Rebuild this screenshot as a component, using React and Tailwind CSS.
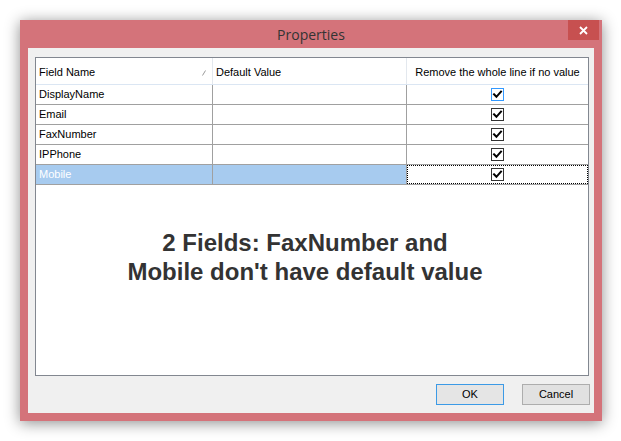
import React from "react";

const rows = [
  { name: "DisplayName", hover: true },
  { name: "Email" },
  { name: "FaxNumber" },
  { name: "IPPhone" },
  { name: "Mobile", selected: true },
];

function Check({ blue }) {
  return (
    <svg width="13" height="13" viewBox="0 0 13 13">
      <rect x="0.5" y="0.5" width="12" height="12" fill="#fff" stroke={blue ? "#3399ff" : "#333333"} />
      <path d="M3 6.3 L5.4 8.8 L10 3.6" fill="none" stroke="#000" strokeWidth="2" strokeLinecap="square" />
    </svg>
  );
}

export default function App() {
  return (
    <div className="w-[621px] h-[441px] bg-white pt-[20px] pl-[20px] font-['Liberation_Sans',Arial,sans-serif]">
      <div className="w-[582px] h-[401px] bg-[#d4737a] shadow-[0_2px_14px_rgba(0,0,0,0.45)] flex flex-col">
        {/* title bar */}
        <div className="h-[28px] grid grid-cols-[1fr_auto_1fr]">
          <div />
          <div className="self-center pt-[1px] text-[14px] text-[#333] font-['Open_Sans',sans-serif]">Properties</div>
          <div className="flex justify-end items-start pr-[3px]">
            <div className="w-[31px] h-[20px] bg-[#c75050] flex items-center justify-center">
              <svg width="9" height="9" viewBox="0 0 9 9">
                <path d="M1 1 L8 8 M8 1 L1 8" stroke="#fff" strokeWidth="1.8" />
              </svg>
            </div>
          </div>
        </div>
        {/* client */}
        <div className="mx-[8px] mb-[8px] flex-1 bg-[#f0f0f0] flex flex-col pt-[9px] pl-[7px] pr-[4px] pb-[8px]">
          <div className="h-[319px] mr-[1px] border border-[#828790] bg-white flex flex-col text-[11px] text-black">
            {/* header */}
            <div className="h-[27px] flex border-b border-[#dbe6f3]">
              <div className="w-[177px] border-r border-[#e3e8ee] flex items-center pl-[3px] pt-[3px] pr-[6px]">
                <span className="flex-1">Field Name</span>
                <svg width="4" height="6" viewBox="0 0 4 6">
                  <path d="M0.5 5.5 L3.5 0.5" stroke="#9a9a9a" strokeWidth="1" />
                </svg>
              </div>
              <div className="w-[194px] border-r border-[#e3e8ee] flex items-center pl-[3px] pt-[3px]">Default Value</div>
              <div className="flex-1 flex items-center justify-center pt-[3px]">Remove the whole line if no value</div>
            </div>
            {/* rows */}
            {rows.map((r) => (
              <div key={r.name} className="h-[20px] flex border-b border-[#a0a0a0]">
                <div className={`w-[177px] border-r border-[#a0a0a0] flex items-center pl-[3px] ${r.selected ? "bg-[#a7cbef] text-white" : ""}`}>
                  {r.name}
                </div>
                <div className={`w-[194px] border-r border-[#a0a0a0] ${r.selected ? "bg-[#a7cbef]" : ""}`} />
                <div className={`flex-1 flex items-center justify-center ${r.selected ? "border border-dotted border-black" : ""}`}>
                  <Check blue={r.hover} />
                </div>
              </div>
            ))}
            {/* empty area with annotation */}
            <div className="flex-1 pt-[43px] pr-[14px] text-center text-[24px] leading-[29px] font-bold text-[#333]">
              <div>2 Fields: FaxNumber and</div>
              <div>Mobile don't have default value</div>
            </div>
          </div>
          {/* buttons */}
          <div className="mt-[8px] flex justify-end gap-[18px]">
            <div className="w-[68px] h-[21px] border border-[#3c9ae6] bg-[#e5e5e5] flex items-center justify-center text-[11px] text-black">
              OK
            </div>
            <div className="w-[68px] h-[21px] border border-[#adadad] bg-[#e1e1e1] flex items-center justify-center text-[11px] text-black">
              Cancel
            </div>
          </div>
        </div>
      </div>
    </div>
  );
}
